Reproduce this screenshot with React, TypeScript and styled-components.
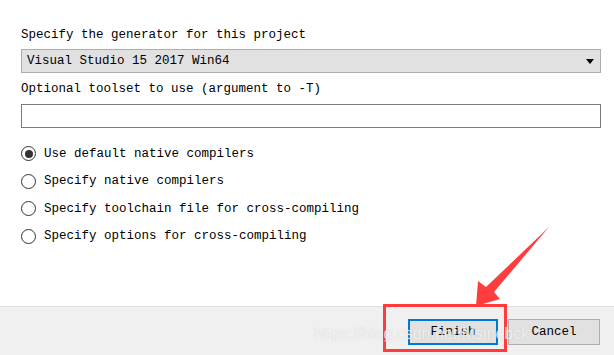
import React from 'react';
import styled, { createGlobalStyle } from 'styled-components';

const GlobalStyle = createGlobalStyle`
    html, body {
        margin: 0;
        padding: 0;
        background: #ffffff;
    }
    body {
        font-family: "Liberation Mono", "DejaVu Sans Mono", monospace;
        font-size: 12.5px;
        color: #000;
    }
`;

const Page = styled.div`
    position: relative;
    width: 614px;
    height: 355px;
    display: flex;
    flex-direction: column;
    overflow: hidden;
`;

const Content = styled.div`
    flex: 1;
    padding: 26px 13px 0 21px;
    display: flex;
    flex-direction: column;
`;

const Label = styled.div<{gap?: number}>`
    height: 18px;
    line-height: 18px;
    margin-top: ${props => props.gap ?? 0}px;
    white-space: nowrap;
`;

const Combo = styled.div`
    margin-top: 5px;
    height: 24px;
    box-sizing: border-box;
    border: 1px solid #adadad;
    background: #e1e1e1;
    display: flex;
    align-items: center;
    justify-content: space-between;
    padding: 0 6px 0 5px;
`;

const ComboArrow = styled.span`
    width: 0;
    height: 0;
    border-left: 4.5px solid transparent;
    border-right: 4.5px solid transparent;
    border-top: 5px solid #000;
`;

const TextBox = styled.div`
    margin-top: 6px;
    height: 24px;
    box-sizing: border-box;
    border: 1px solid #7a7a7a;
    background: #fff;
`;

const RadioGroup = styled.div`
    margin-top: 12px;
    display: flex;
    flex-direction: column;
`;

const RadioRow = styled.div`
    height: 27.5px;
    display: flex;
    align-items: center;
    gap: 8px;
`;

const RadioCircle = styled.span<{checked?: boolean}>`
    width: 15px;
    height: 15px;
    box-sizing: border-box;
    border-radius: 50%;
    border: 1px solid #333;
    background: #fff;
    display: flex;
    align-items: center;
    justify-content: center;
    &::after {
        content: '';
        width: 8px;
        height: 8px;
        border-radius: 50%;
        background: ${props => props.checked ? '#333' : 'transparent'};
    }
`;

const Footer = styled.div`
    height: 49px;
    box-sizing: border-box;
    border-top: 1px solid #dfdfdf;
    background: #f0f0f0;
    display: flex;
    justify-content: flex-end;
    align-items: flex-start;
    gap: 10px;
    padding: 12px 14px 0 0;
`;

const Button = styled.div<{primary?: boolean}>`
    width: ${props => props.primary ? 90 : 92}px;
    height: 26px;
    box-sizing: border-box;
    border: ${props => props.primary ? '2px solid #0078d7' : '1px solid #adadad'};
    background: #e1e1e1;
    display: flex;
    align-items: center;
    justify-content: center;
`;

const Highlight = styled.div`
    position: absolute;
    left: 383px;
    top: 304px;
    width: 124px;
    height: 48px;
    box-sizing: border-box;
    border: 3px solid #ff3b3b;
    pointer-events: none;
`;

const ArrowSvg = styled.svg`
    position: absolute;
    left: 0;
    top: 0;
    pointer-events: none;
`;

const Watermark = styled.div`
    position: absolute;
    left: 314px;
    top: 325px;
    font-family: "Liberation Sans", Arial, sans-serif;
    font-size: 16px;
    color: rgba(255, 255, 255, 0.75);
    text-shadow: 0 0 1px rgba(120, 120, 120, 0.35);
    pointer-events: none;
    white-space: nowrap;
`;

const options = [
    'Use default native compilers',
    'Specify native compilers',
    'Specify toolchain file for cross-compiling',
    'Specify options for cross-compiling',
];

const App: React.FC = () => {
    return (
        <>
            <GlobalStyle />
            <Page>
                <Content>
                    <Label>Specify the generator for this project</Label>
                    <Combo>
                        <span>Visual Studio 15 2017 Win64</span>
                        <ComboArrow />
                    </Combo>
                    <Label gap={7}>Optional toolset to use (argument to -T)</Label>
                    <TextBox />
                    <RadioGroup>
                        {options.map((o, i) => (
                            <RadioRow key={`opt${i}`}>
                                <RadioCircle checked={i === 0} />
                                <span>{o}</span>
                            </RadioRow>
                        ))}
                    </RadioGroup>
                </Content>
                <Footer>
                    <Button primary>Finish</Button>
                    <Button>Cancel</Button>
                </Footer>
                <Highlight />
                <ArrowSvg width="614" height="355" viewBox="0 0 614 355">
                    <polygon
                        points="549,227 494,292 500,299 476,306 478,281 486,287"
                        fill="#ff3d3d"
                    />
                </ArrowSvg>
                <Watermark>https://blog.csdn.net/Msinebck</Watermark>
            </Page>
        </>
    );
};

export default App;
